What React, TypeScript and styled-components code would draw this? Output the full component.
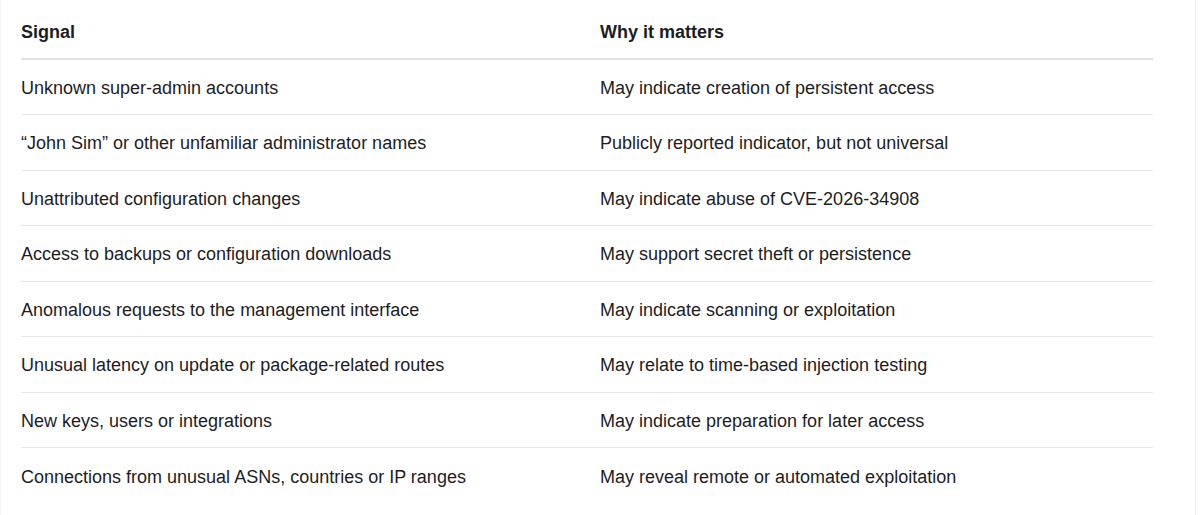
import React from 'react';
import styled, { createGlobalStyle } from 'styled-components';

const GlobalStyle = createGlobalStyle`
  html, body {
    margin: 0;
    padding: 0;
    background: #ffffff;
  }
  body {
    font-family: "Liberation Sans", Arial, sans-serif;
    color: #1d1d1f;
  }
`;

const Frame = styled.div`
  width: 1196px;
  height: 515px;
  box-sizing: border-box;
  border-right: 1px solid #f1f1f1;
  border-left: 1px solid #f6f6f6;
  padding-left: 20px;
`;

const Table = styled.div`
  width: 1132px;
  display: flex;
  flex-direction: column;
`;

const Row = styled.div<{ $head?: boolean; $last?: boolean }>`
  display: grid;
  grid-template-columns: 579px 1fr;
  align-items: center;
  box-sizing: border-box;
  height: ${(p) => (p.$head ? '59.5px' : '55.5px')};
  padding-top: ${(p) => (p.$head ? '8px' : '3px')};
  border-bottom: ${(p) =>
    p.$last ? 'none' : p.$head ? '2px solid #e2e2e2' : '1px solid #e6e6e6'};
  font-size: 18px;
  font-weight: ${(p) => (p.$head ? 700 : 400)};
`;

const Cell = styled.div`
  white-space: nowrap;
`;

const rows: [string, string][] = [
  ['Unknown super-admin accounts', 'May indicate creation of persistent access'],
  ['\u201cJohn Sim\u201d or other unfamiliar administrator names', 'Publicly reported indicator, but not universal'],
  ['Unattributed configuration changes', 'May indicate abuse of CVE-2026-34908'],
  ['Access to backups or configuration downloads', 'May support secret theft or persistence'],
  ['Anomalous requests to the management interface', 'May indicate scanning or exploitation'],
  ['Unusual latency on update or package-related routes', 'May relate to time-based injection testing'],
  ['New keys, users or integrations', 'May indicate preparation for later access'],
  ['Connections from unusual ASNs, countries or IP ranges', 'May reveal remote or automated exploitation'],
];

const App = () => {
  return (
    <>
      <GlobalStyle />
      <Frame>
        <Table>
          <Row $head>
            <Cell>Signal</Cell>
            <Cell>Why it matters</Cell>
          </Row>
          {rows.map(([signal, why], index) => (
            <Row key={index} $last={index === rows.length - 1}>
              <Cell>{signal}</Cell>
              <Cell>{why}</Cell>
            </Row>
          ))}
        </Table>
      </Frame>
    </>
  );
};

export default App;
